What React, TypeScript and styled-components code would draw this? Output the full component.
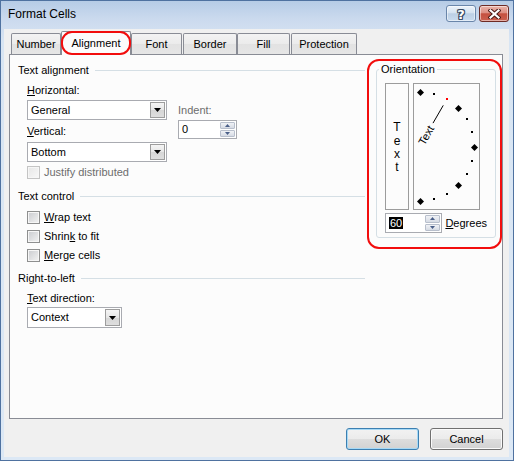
import React from "react";
import styled, { createGlobalStyle, css } from "styled-components";

const GlobalStyle = createGlobalStyle`
  html, body { margin: 0; padding: 0; background: #fff; }
  body { font-family: "Liberation Sans", Arial, sans-serif; font-size: 11px; color: #000; }
  * { box-sizing: border-box; }
`;

const Window = styled.div`
  position: relative;
  width: 514px;
  height: 461px;
  display: flex;
  flex-direction: column;
  border: 1px solid #4f72a0;
  background: linear-gradient(#b6cce6 0px, #cbdaee 18px, #d8e5f3 40px, #dce8f5 100%);
  padding: 0 4px 3px 3px;
`;

const TitleBar = styled.div`
  height: 28px;
  display: flex;
  align-items: flex-start;
`;

const TitleText = styled.div`
  margin: 6px 0 0 4px;
  font-size: 12px;
  line-height: 15px;
  color: #000;
`;

const CaptionButtons = styled.div`
  margin: 4px 0 0 auto;
  display: flex;
  gap: 3px;
`;

const CaptionButton = styled.div<{ $variant: "help" | "close" }>`
  width: 30px;
  height: 17px;
  border-radius: 3px;
  display: flex;
  align-items: center;
  justify-content: center;
  box-shadow: inset 0 0 0 1px rgba(255, 255, 255, 0.5);
  ${(p) =>
    p.$variant === "close"
      ? css`
          border: 1px solid #6e2b25;
          background: linear-gradient(#eab4aa 0%, #dd8e82 45%, #c5503f 52%, #cb604f 100%);
        `
      : css`
          border: 1px solid #6a86aa;
          background: linear-gradient(#edf3fa 0%, #d6e3f1 45%, #bccfe5 52%, #cadcef 100%);
        `}
`;

const HelpGlyph = styled.span`
  font-family: "DejaVu Sans", sans-serif;
  font-weight: bold;
  font-size: 13px;
  line-height: 13px;
  margin-top: 1px;
  color: #fff;
  text-shadow: 1px 0 0 #3a4c64, -1px 0 0 #3a4c64, 0 1px 0 #3a4c64, 0 -1px 0 #3a4c64,
    1px 1px 0 #3a4c64, -1px -1px 0 #3a4c64, 1px -1px 0 #3a4c64, -1px 1px 0 #3a4c64;
`;

const Client = styled.div`
  flex: 1;
  background: #f0f0f0;
  padding: 2px 6px 7px 5px;
  display: flex;
  flex-direction: column;
`;

const TabStrip = styled.div`
  height: 23px;
  display: flex;
  align-items: flex-end;
  padding-left: 2px;
`;

const Tab = styled.div<{ $w: number; $active?: boolean; $gap?: number }>`
  width: ${(p) => p.$w}px;
  margin-left: ${(p) => p.$gap ?? 0}px;
  display: flex;
  align-items: center;
  justify-content: center;
  border: 1px solid #898c95;
  border-bottom: none;
  border-radius: 2px 2px 0 0;
  ${(p) =>
    p.$active
      ? css`
          height: 24px;
          margin-bottom: -1px;
          padding-bottom: 2px;
          background: #fcfcfc;
          position: relative;
          z-index: 1;
        `
      : css`
          height: 21px;
          background: linear-gradient(#f3f3f3 0%, #ebebeb 50%, #e2e2e2 51%, #e6e6e6 100%);
        `}
`;

const Panel = styled.div`
  height: 365px;
  border: 1px solid #898c95;
  background: #fcfcfc;
  padding: 9px 6px 0 8px;
  display: flex;
  align-items: flex-start;
`;

const LeftCol = styled.div`
  width: 347px;
  display: flex;
  flex-direction: column;
`;

const SectionHeader = styled.div<{ $mt?: number }>`
  margin-top: ${(p) => p.$mt ?? 0}px;
  height: 13px;
  line-height: 13px;
  display: flex;
  align-items: center;
  white-space: nowrap;
  &::after {
    content: "";
    flex: 1;
    height: 1px;
    margin-left: 6px;
    background: #d5dfe5;
  }
`;

const Indented = styled.div`
  margin-left: 9px;
  display: flex;
  flex-direction: column;
`;

const Label = styled.div<{ $mt?: number; $disabled?: boolean }>`
  margin-top: ${(p) => p.$mt ?? 0}px;
  height: 13px;
  line-height: 13px;
  white-space: nowrap;
  color: ${(p) => (p.$disabled ? "#6d6d6d" : "#000")};
`;

const AlignRow = styled.div`
  margin-top: 7px;
  display: flex;
  gap: 11px;
`;

const Column = styled.div<{ $w?: number; $mt?: number }>`
  ${(p) => (p.$w ? `width: ${p.$w}px;` : "")}
  margin-top: ${(p) => p.$mt ?? 0}px;
  display: flex;
  flex-direction: column;
`;

const Combo = styled.div<{ $w: number; $h: number; $mt?: number }>`
  width: ${(p) => p.$w}px;
  height: ${(p) => p.$h}px;
  margin-top: ${(p) => p.$mt ?? 0}px;
  border: 1px solid #a9abb1;
  background: #fff;
  display: flex;
  align-items: center;
  padding-left: 3px;
`;

const ComboText = styled.span`
  flex: 1;
  line-height: 13px;
`;

const DropButton = styled.div`
  width: 15px;
  align-self: stretch;
  margin: 1px;
  border: 1px solid #9d9d9d;
  background: linear-gradient(#f5f5f5 0%, #e6e6e6 50%, #d6d6d6 51%, #dedede 100%);
  display: flex;
  align-items: center;
  justify-content: center;
`;

const Spinner = styled.div<{ $w: number; $h: number }>`
  width: ${(p) => p.$w}px;
  height: ${(p) => p.$h}px;
  border: 1px solid #a9abb1;
  background: #fff;
  display: flex;
  align-items: center;
  padding-left: 3px;
`;

const SpinValue = styled.span`
  flex: 1;
  line-height: 13px;
`;

const Selected = styled.span`
  background: #000;
  color: #fff;
  line-height: 11px;
  padding: 0 1px;
`;

const SpinButtons = styled.div`
  width: 15px;
  align-self: stretch;
  margin: 1px;
  display: flex;
  flex-direction: column;
  gap: 1px;
`;

const SpinHalf = styled.div`
  flex: 1;
  border: 1px solid #b8bfcc;
  border-radius: 1px;
  background: linear-gradient(#f0f2f6, #d6dbe4);
  display: flex;
  align-items: center;
  justify-content: center;
`;

const CheckRow = styled.div<{ $mt?: number; $disabled?: boolean }>`
  margin-top: ${(p) => p.$mt ?? 0}px;
  height: 13px;
  display: flex;
  align-items: center;
  gap: 4px;
  color: ${(p) => (p.$disabled ? "#6d6d6d" : "#000")};
  line-height: 13px;
`;

const CheckBox = styled.div<{ $disabled?: boolean }>`
  width: 13px;
  height: 13px;
  border: 1px solid ${(p) => (p.$disabled ? "#c4c4c4" : "#8e8f8f")};
  box-shadow: inset 0 0 0 1px #f6f6f6;
  background: ${(p) =>
    p.$disabled
      ? "linear-gradient(135deg, #e6e6e6, #f8f8f8)"
      : "linear-gradient(135deg, #c9cbcf, #f3f3f3)"};
`;

const GroupBox = styled.div`
  width: 120px;
  margin: 5px 0 0 11px;
  border: 1px solid #d5dfe5;
  border-radius: 3px;
  padding: 0 8px 4px 8px;
  display: flex;
  flex-direction: column;
`;

const Legend = styled.div`
  align-self: flex-start;
  margin: -7px 0 0 -6px;
  padding: 0 2px;
  height: 13px;
  line-height: 13px;
  background: #fcfcfc;
`;

const OrientRow = styled.div`
  margin-top: 7px;
  display: flex;
  gap: 4px;
`;

const VerticalBox = styled.div`
  width: 24px;
  height: 127px;
  border: 1px solid #9c9c9c;
  padding-top: 3px;
  display: flex;
  flex-direction: column;
  align-items: center;
  justify-content: center;
  font-size: 12px;
  line-height: 13.4px;
`;

const DialBox = styled.div`
  width: 67px;
  height: 127px;
  border: 1px solid #9c9c9c;
  display: flex;
`;

const DegreeRow = styled.div`
  margin-top: 3px;
  display: flex;
  align-items: center;
  gap: 3px;
`;

const ButtonRow = styled.div`
  margin-top: 9px;
  display: flex;
  justify-content: flex-end;
  gap: 11px;
`;

const DialogButton = styled.div<{ $default?: boolean }>`
  width: 73px;
  height: 22px;
  border-radius: 3px;
  display: flex;
  align-items: center;
  justify-content: center;
  background: linear-gradient(#f2f2f2 0%, #ebebeb 50%, #dddddd 51%, #d2d2d2 100%);
  ${(p) =>
    p.$default
      ? css`
          border: 1px solid #3c7fb1;
          box-shadow: inset 0 0 0 1px #a6d9f6;
        `
      : css`
          border: 1px solid #707070;
          box-shadow: inset 0 0 0 1px #fafafa;
        `}
`;

const Annotation = styled.div<{ $x: number; $y: number; $w: number; $h: number; $r: number }>`
  position: absolute;
  left: ${(p) => p.$x}px;
  top: ${(p) => p.$y}px;
  width: ${(p) => p.$w}px;
  height: ${(p) => p.$h}px;
  border: 2px solid #f20d0d;
  border-radius: ${(p) => p.$r}px;
  z-index: 5;
  pointer-events: none;
`;

const Arrow = () => (
  <svg width="7" height="4" viewBox="0 0 7 4">
    <polygon points="0,0 7,0 3.5,4" fill="#000" />
  </svg>
);

const SmallArrow = ({ up }: { up?: boolean }) => (
  <svg width="5" height="3" viewBox="0 0 5 3">
    <polygon points={up ? "0,3 5,3 2.5,0" : "0,0 5,0 2.5,3"} fill="#4a5f88" />
  </svg>
);

const CloseIcon = () => (
  <svg width="13" height="10" viewBox="0 0 13 10">
    <path d="M2.5 1.5 L10.5 8.5 M10.5 1.5 L2.5 8.5" stroke="#4a1a16" strokeWidth="4.2" strokeLinecap="square" />
    <path d="M2.5 1.5 L10.5 8.5 M10.5 1.5 L2.5 8.5" stroke="#ffffff" strokeWidth="2.2" strokeLinecap="square" />
  </svg>
);

const Dial = () => {
  const cx = 5.5;
  const cy = 62.5;
  const R = 54.3;
  const marks: React.ReactNode[] = [];
  for (let a = 90; a >= -90; a -= 15) {
    const rad = (a * Math.PI) / 180;
    const x = Math.round(cx + R * Math.cos(rad));
    const y = Math.round(cy - R * Math.sin(rad));
    if (a % 45 === 0) {
      const px = x + 0.5;
      const py = y + 0.5;
      marks.push(
        <polygon
          key={a}
          points={`${px},${py - 3.5} ${px + 3.5},${py} ${px},${py + 3.5} ${px - 3.5},${py}`}
          fill="#000"
        />
      );
    } else {
      marks.push(<rect key={a} x={x - 1} y={y - 1} width={2} height={2} fill={a === 60 ? "#ff0000" : "#000"} />);
    }
  }
  const r60 = (60 * Math.PI) / 180;
  const lx1 = cx + 27 * Math.cos(r60);
  const ly1 = cy - 27 * Math.sin(r60);
  const lx2 = cx + 47.5 * Math.cos(r60);
  const ly2 = cy - 47.5 * Math.sin(r60);
  return (
    <svg width="65" height="125" viewBox="0 0 65 125">
      {marks}
      <line x1={lx1} y1={ly1} x2={lx2} y2={ly2} stroke="#000" strokeWidth="1" />
      <text
        x={cx + 3}
        y={cy}
        transform={`rotate(-60 ${cx} ${cy})`}
        dominantBaseline="central"
        fontFamily="Liberation Sans, Arial, sans-serif"
        fontSize="11"
        fill="#000"
      >
        Text
      </text>
    </svg>
  );
};

export default function App() {
  return (
    <>
      <GlobalStyle />
      <Window>
        <TitleBar>
          <TitleText>Format Cells</TitleText>
          <CaptionButtons>
            <CaptionButton $variant="help">
              <HelpGlyph>?</HelpGlyph>
            </CaptionButton>
            <CaptionButton $variant="close">
              <CloseIcon />
            </CaptionButton>
          </CaptionButtons>
        </TitleBar>
        <Client>
          <TabStrip>
            <Tab $w={50}>Number</Tab>
            <Tab $w={70} $active>
              Alignment
            </Tab>
            <Tab $w={51}>Font</Tab>
            <Tab $w={54} $gap={1}>
              Border
            </Tab>
            <Tab $w={53}>Fill</Tab>
            <Tab $w={66} $gap={1}>
              Protection
            </Tab>
          </TabStrip>
          <Panel>
            <LeftCol>
              <SectionHeader>Text alignment</SectionHeader>
              <Indented>
                <AlignRow>
                  <Column $w={140}>
                    <Label>
                      <u>H</u>orizontal:
                    </Label>
                    <Combo $w={140} $h={20} $mt={3}>
                      <ComboText>General</ComboText>
                      <DropButton>
                        <Arrow />
                      </DropButton>
                    </Combo>
                    <Label $mt={5}>
                      <u>V</u>ertical:
                    </Label>
                    <Combo $w={140} $h={20} $mt={4}>
                      <ComboText>Bottom</ComboText>
                      <DropButton>
                        <Arrow />
                      </DropButton>
                    </Combo>
                  </Column>
                  <Column $mt={20}>
                    <Label $disabled>Indent:</Label>
                    <Column $mt={3}>
                      <Spinner $w={59} $h={19}>
                        <SpinValue>0</SpinValue>
                        <SpinButtons>
                          <SpinHalf>
                            <SmallArrow up />
                          </SpinHalf>
                          <SpinHalf>
                            <SmallArrow />
                          </SpinHalf>
                        </SpinButtons>
                      </Spinner>
                    </Column>
                  </Column>
                </AlignRow>
                <CheckRow $mt={4} $disabled>
                  <CheckBox $disabled />
                  Justify distributed
                </CheckRow>
              </Indented>
              <SectionHeader $mt={11}>Text control</SectionHeader>
              <Indented>
                <CheckRow $mt={8}>
                  <CheckBox />
                  <span>
                    <u>W</u>rap text
                  </span>
                </CheckRow>
                <CheckRow $mt={6}>
                  <CheckBox />
                  <span>
                    Shrin<u>k</u> to fit
                  </span>
                </CheckRow>
                <CheckRow $mt={6}>
                  <CheckBox />
                  <span>
                    <u>M</u>erge cells
                  </span>
                </CheckRow>
              </Indented>
              <SectionHeader $mt={10}>Right-to-left</SectionHeader>
              <Indented>
                <Label $mt={7}>
                  <u>T</u>ext direction:
                </Label>
                <Combo $w={95} $h={21} $mt={2}>
                  <ComboText>Context</ComboText>
                  <DropButton>
                    <Arrow />
                  </DropButton>
                </Combo>
              </Indented>
            </LeftCol>
            <GroupBox>
              <Legend>Orientation</Legend>
              <OrientRow>
                <VerticalBox>
                  <span>T</span>
                  <span>e</span>
                  <span>x</span>
                  <span>t</span>
                </VerticalBox>
                <DialBox>
                  <Dial />
                </DialBox>
              </OrientRow>
              <DegreeRow>
                <Spinner $w={59} $h={20}>
                  <SpinValue>
                    <Selected>60</Selected>
                  </SpinValue>
                  <SpinButtons>
                    <SpinHalf>
                      <SmallArrow up />
                    </SpinHalf>
                    <SpinHalf>
                      <SmallArrow />
                    </SpinHalf>
                  </SpinButtons>
                </Spinner>
                <span>
                  <u>D</u>egrees
                </span>
              </DegreeRow>
            </GroupBox>
          </Panel>
          <ButtonRow>
            <DialogButton $default>OK</DialogButton>
            <DialogButton>Cancel</DialogButton>
          </ButtonRow>
        </Client>
        <Annotation $x={60} $y={30} $w={70} $h={24} $r={11} />
        <Annotation $x={366} $y={58} $w={135} $h={190} $r={12} />
      </Window>
    </>
  );
}
